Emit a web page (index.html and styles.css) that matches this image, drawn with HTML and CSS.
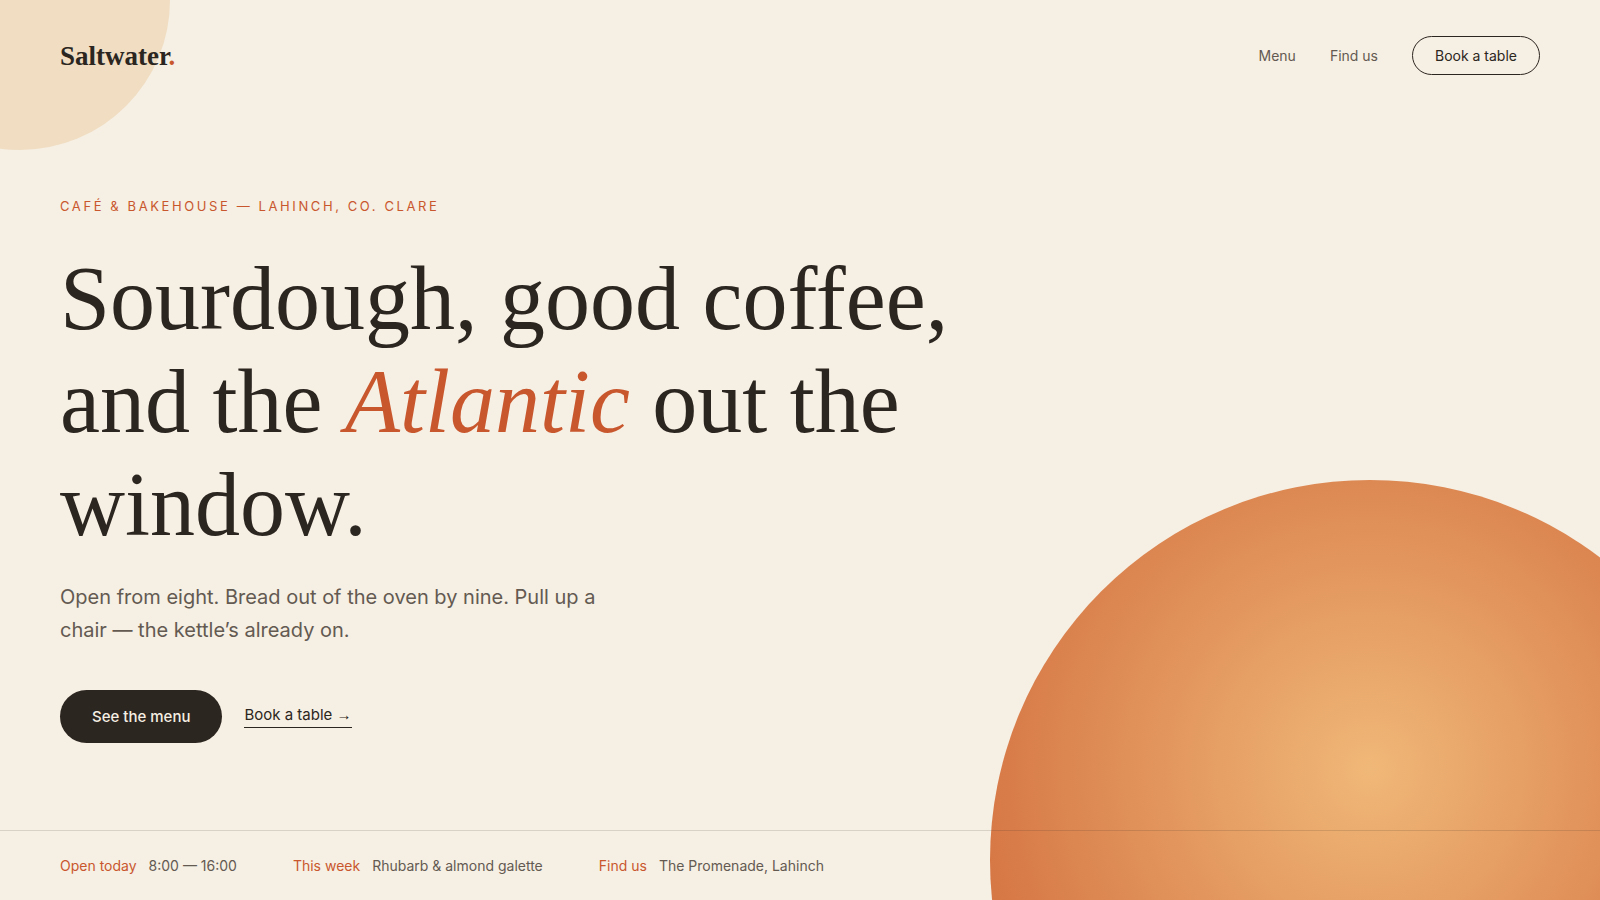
FILE: index.html
```
<!DOCTYPE html>
<html lang="en">

<head>
    <meta charset="UTF-8">
    <meta name="viewport" content="width=device-width, initial-scale=1.0">
    <title>Saltwater — Café &amp; Bakehouse, Lahinch</title>
    <link rel="stylesheet" href="styles.css">
</head>

<body>
    <div class="page">
        <!-- Decorative sun shapes -->
        <div class="sun sun-small"></div>
        <div class="sun sun-large"></div>

        <header class="header">
            <a class="logo" href="#">Saltwater<span class="logo-dot">.</span></a>
            <nav class="nav">
                <a class="nav-link" href="#menu">Menu</a>
                <a class="nav-link" href="#find-us">Find us</a>
                <button class="btn-outline" type="button">Book a table</button>
            </nav>
        </header>

        <main class="hero">
            <p class="eyebrow">Café &amp; Bakehouse — Lahinch, Co. Clare</p>
            <h1>Sourdough, good coffee, and the <em>Atlantic</em> out the window.</h1>
            <p class="lead">Open from eight. Bread out of the oven by nine. Pull up a chair — the kettle’s already on.</p>
            <div class="actions">
                <button class="btn-solid" type="button">See the menu</button>
                <a class="text-link" href="#book">Book a table <span class="arrow">→</span></a>
            </div>
        </main>

        <footer class="info">
            <div class="info-item"><span class="info-label">Open today</span><span>8:00 — 16:00</span></div>
            <div class="info-item"><span class="info-label">This week</span><span>Rhubarb &amp; almond galette</span></div>
            <div class="info-item"><span class="info-label">Find us</span><span>The Promenade, Lahinch</span></div>
        </footer>
    </div>
</body>

</html>
```
FILE: styles.css
```
* {
    box-sizing: border-box;
}

body {
    margin: 0;
    font-family: Inter, sans-serif;
    background-color: #f6efe3;
    color: #2c2621;
}

h1,
p {
    margin: 0;
}

a {
    color: inherit;
    text-decoration: none;
}

button {
    font-family: inherit;
    cursor: pointer;
}

.page {
    position: relative;
    display: flex;
    flex-direction: column;
    min-height: 100vh;
    overflow: hidden;
}

.sun {
    position: absolute;
    border-radius: 50%;
}

.sun-small {
    top: -150px;
    left: -130px;
    width: 300px;
    height: 300px;
    background: #f0ddc2;
}

.sun-large {
    right: -150px;
    bottom: -340px;
    width: 760px;
    height: 760px;
    background: radial-gradient(circle at 50% 38%, #f0b878, #c8552b);
}

.header,
.hero,
.info {
    position: relative;
}

.header {
    display: flex;
    align-items: center;
    justify-content: space-between;
    padding: 36px 60px;
}

.logo {
    font-family: "Liberation Serif", serif;
    font-size: 27px;
    font-weight: 700;
    line-height: 32px;
}

.logo-dot {
    color: #c9572e;
}

.nav {
    display: flex;
    align-items: center;
    gap: 34px;
    font-size: 14px;
}

.nav-link {
    color: #635a52;
}

.btn-outline {
    padding: 10px 22px;
    border: 1px solid #2c2621;
    border-radius: 999px;
    background: transparent;
    color: #2c2621;
    font-size: 14px;
}

.hero {
    flex: 1;
    display: flex;
    flex-direction: column;
    justify-content: center;
    padding: 0 60px;
}

.eyebrow {
    margin-bottom: 33px;
    color: #c9572e;
    font-size: 13px;
    line-height: 16px;
    letter-spacing: 0.2em;
    text-transform: uppercase;
}

h1 {
    max-width: 940px;
    margin-bottom: 25px;
    font-family: "Liberation Serif", serif;
    font-size: 90px;
    font-weight: 400;
    line-height: 103px;
}

h1 em {
    color: #c9572e;
}

.lead {
    max-width: 560px;
    margin-bottom: 43px;
    color: #635a52;
    font-size: 20px;
    line-height: 33px;
}

.actions {
    display: flex;
    align-items: center;
    gap: 22px;
}

.btn-solid {
    padding: 17px 32px;
    border: none;
    border-radius: 999px;
    background: #2c2621;
    color: #f6efe3;
    font-size: 15px;
    font-weight: 500;
    line-height: 19px;
}

.text-link {
    padding-bottom: 3px;
    border-bottom: 1px solid #2c2621;
    font-size: 15px;
}

.arrow {
    font-family: "Liberation Sans", sans-serif;
}

.info {
    display: flex;
    flex-wrap: wrap;
    gap: 56px;
    padding: 26px 60px;
    border-top: 1px solid rgba(44, 38, 33, 0.15);
    color: #635a52;
    font-size: 14px;
}

.info-item {
    display: flex;
    gap: 12px;
}

.info-label {
    color: #c9572e;
}
```
